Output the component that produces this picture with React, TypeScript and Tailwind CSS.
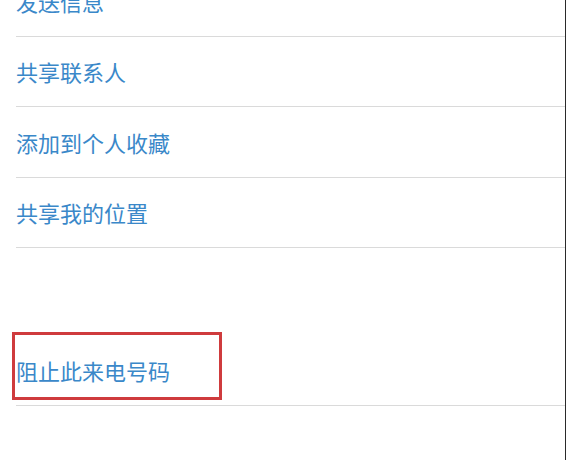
const items = ['发送信息', '共享联系人', '添加到个人收藏', '共享我的位置'];

function Row({ label, first }: { label: string; first?: boolean }) {
  return (
    <div className={first ? '-mt-[34px]' : ''}>
      <div className="ml-4 flex h-[70.5px] items-center border-b border-[#dadada]">
        <span className="text-[22px] leading-none text-[#3a88c9]">{label}</span>
      </div>
    </div>
  );
}

export default function App() {
  return (
    <div
      className="relative h-[460px] w-[566px] overflow-hidden border-r border-[#2a2a2a] bg-white"
      style={{ fontFamily: '"Noto Sans CJK SC", "Noto Sans", sans-serif' }}
    >
      {items.map((label, i) => (
        <Row key={label} label={label} first={i === 0} />
      ))}

      {/* section gap */}
      <div className="h-[87px]" />

      <div className="relative">
        <div className="ml-4 flex h-[71px] items-center border-b border-[#dadada]">
          <span className="text-[22px] leading-none text-[#3a88c9]">阻止此来电号码</span>
        </div>
        {/* red highlight box */}
        <div className="absolute left-[12px] top-[-3px] h-[68px] w-[210px] border-[3px] border-[#cf3b3d]" />
      </div>
    </div>
  );
}
